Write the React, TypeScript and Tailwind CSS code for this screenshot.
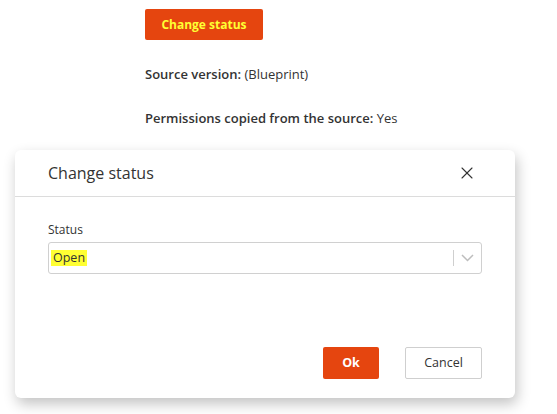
import { X } from 'lucide-react';

const App = () => {
  return (
    <div className="w-[557px] h-[414px] bg-white overflow-hidden text-[#333] [font-family:'Open_Sans',sans-serif]">
      <div className="pl-[145px] pt-[9px]">
        <button className="h-[31px] w-[118px] bg-[#e5450f] text-[#ffff33] text-[12px] font-bold rounded-[2px]">
          Change status
        </button>
        <p className="mt-[24px] text-[13px] leading-[20px]">
          <span className="font-semibold">Source version:</span> (Blueprint)
        </p>
        <p className="mt-[24px] text-[13px] leading-[20px]">
          <span className="font-semibold">Permissions copied from the source:</span> Yes
        </p>
      </div>

      <div className="ml-[15px] mt-[22px] w-[500px] h-[248px] bg-white rounded-[6px] shadow-[2px_6px_14px_rgba(0,0,0,0.24)] flex flex-col">
        <div className="h-[47px] flex items-center justify-between pl-[33px] pr-[38px] border-b border-[#dcdcdc]">
          <h2 className="text-[16px] text-[#333]">Change status</h2>
          <X className="w-[20px] h-[20px] text-[#333]" strokeWidth={1.3} />
        </div>
        <div className="px-[33px] pt-[25px] flex-1 flex flex-col">
          <label className="text-[12px] leading-[16px] text-[#333]">Status</label>
          <div className="mt-[4px] h-[32px] border border-[#d0d0d0] rounded-[3px] flex items-center pl-[2px]">
            <span className="bg-[#ffff33] text-[12.5px] px-[2px] leading-[16px] text-[#333]">Open</span>
            <div className="ml-auto flex items-center h-full">
              <div className="w-px h-[16px] bg-[#cfcfcf]" />
              <svg width="13" height="8" viewBox="0 0 13 8" className="mx-[7px]">
                <polyline points="1,1 6.5,6.5 12,1" fill="none" stroke="#bdbdbd" strokeWidth="1.5" />
              </svg>
            </div>
          </div>
          <div className="mt-auto mb-[19px] flex justify-end gap-[26px]">
            <button className="h-[32px] w-[56px] bg-[#e5450f] text-white text-[12.5px] font-bold rounded-[2px]">
              Ok
            </button>
            <button className="h-[32px] w-[77px] border border-[#cfcfcf] bg-white text-[#333] text-[12.5px] rounded-[2px]">
              Cancel
            </button>
          </div>
        </div>
      </div>
    </div>
  );
};

export default App;
